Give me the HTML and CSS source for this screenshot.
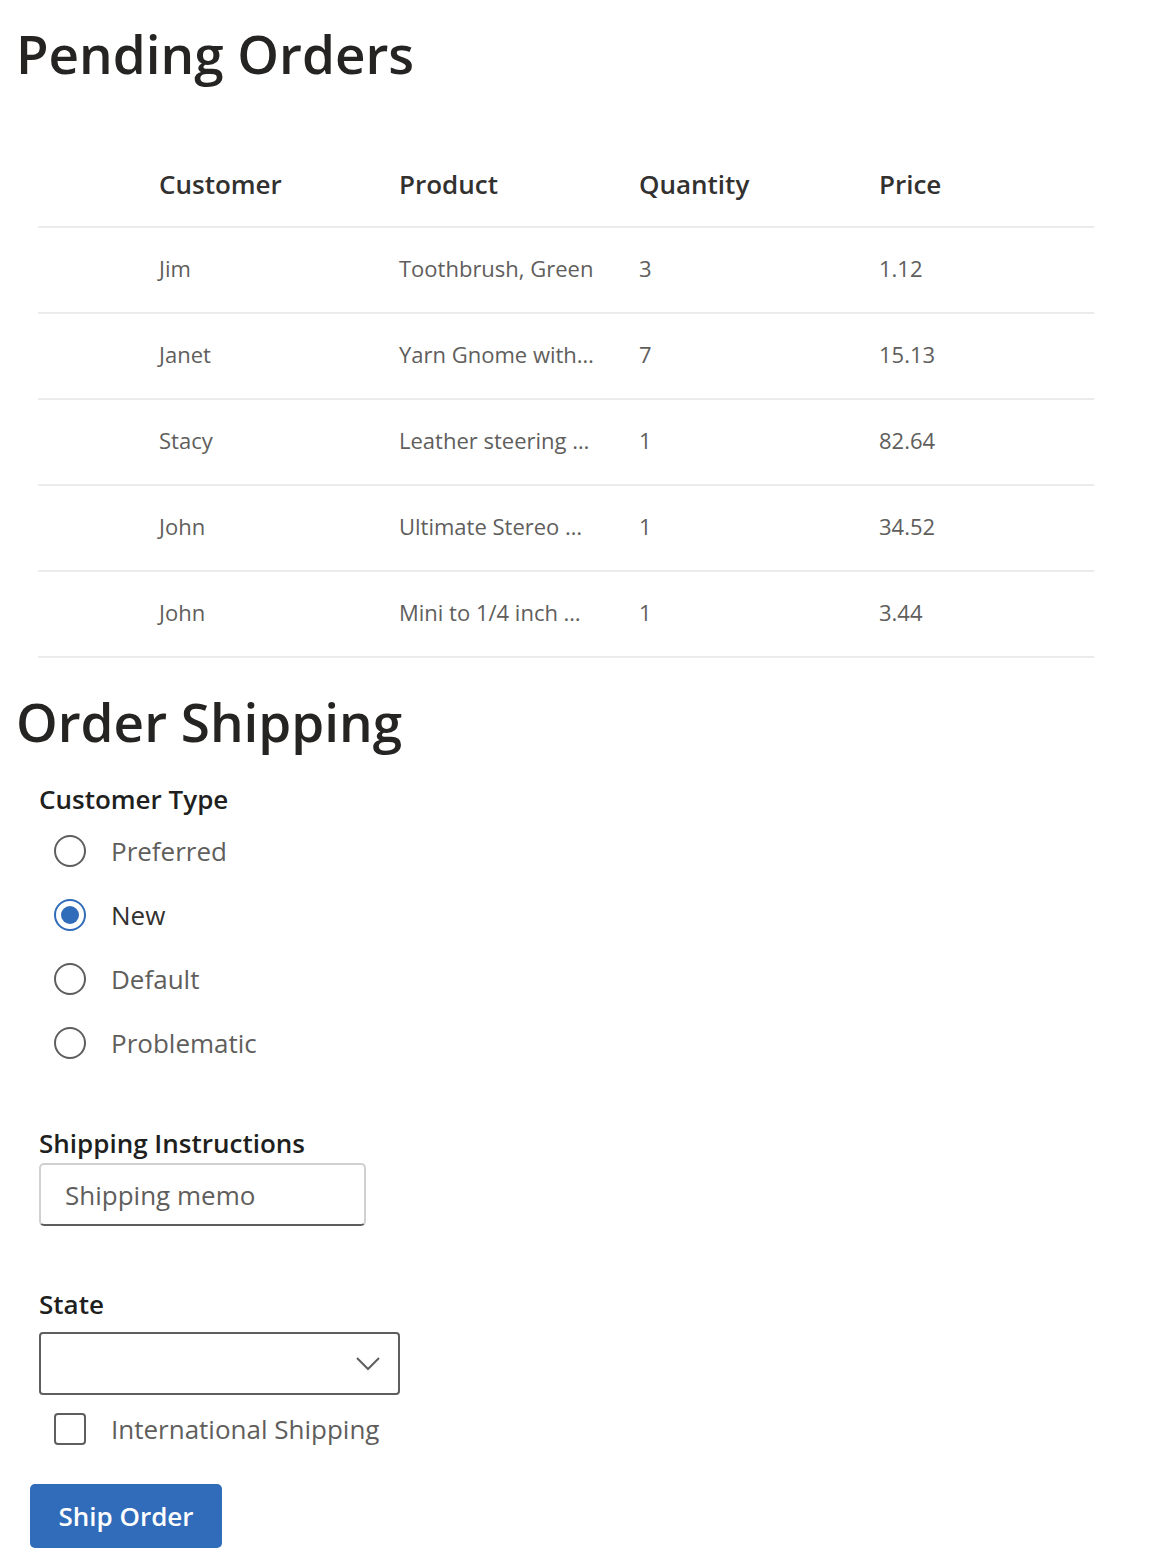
FILE: index.html
```html
<!DOCTYPE html>
<html lang="en">
<head>
<meta charset="utf-8">
<title>Pending Orders</title>
<link rel="stylesheet" href="styles.css">
</head>
<body>
<main class="page">
  <h1 class="title">Pending Orders</h1>
  <div class="list">
    <div class="row head">
      <div class="check"></div>
      <div class="cell">Customer</div>
      <div class="cell">Product</div>
      <div class="cell">Quantity</div>
      <div class="cell">Price</div>
    </div>
    <div class="row">
      <div class="check"></div>
      <div class="cell">Jim</div>
      <div class="cell">Toothbrush, Green</div>
      <div class="cell">3</div>
      <div class="cell">1.12</div>
    </div>
    <div class="row">
      <div class="check"></div>
      <div class="cell">Janet</div>
      <div class="cell">Yarn Gnome with…</div>
      <div class="cell">7</div>
      <div class="cell">15.13</div>
    </div>
    <div class="row">
      <div class="check"></div>
      <div class="cell">Stacy</div>
      <div class="cell">Leather steering …</div>
      <div class="cell">1</div>
      <div class="cell">82.64</div>
    </div>
    <div class="row">
      <div class="check"></div>
      <div class="cell">John</div>
      <div class="cell">Ultimate Stereo …</div>
      <div class="cell">1</div>
      <div class="cell">34.52</div>
    </div>
    <div class="row">
      <div class="check"></div>
      <div class="cell">John</div>
      <div class="cell">Mini to 1/4 inch …</div>
      <div class="cell">1</div>
      <div class="cell">3.44</div>
    </div>
  </div>

  <h1 class="title title2">Order Shipping</h1>
  <form class="form">
    <div class="group">
      <div class="label">Customer Type</div>
      <div class="radios">
        <label class="radio"><span class="circle"></span><span class="rtext">Preferred</span></label>
        <label class="radio on"><span class="circle"></span><span class="rtext">New</span></label>
        <label class="radio"><span class="circle"></span><span class="rtext">Default</span></label>
        <label class="radio"><span class="circle"></span><span class="rtext">Problematic</span></label>
      </div>
    </div>

    <div class="group g-text">
      <div class="label">Shipping Instructions</div>
      <div class="textbox"><span class="placeholder">Shipping memo</span></div>
    </div>

    <div class="group g-state">
      <div class="label">State</div>
      <div class="dropdown">
        <svg class="chev" width="24" height="15" viewBox="0 0 24 15"><path d="M1 2 L12 13 L23 2" fill="none" stroke="#605e5c" stroke-width="2"/></svg>
      </div>
    </div>

    <label class="checkrow"><span class="box"></span><span class="ctext">International Shipping</span></label>

    <div class="actions"><span class="btn">Ship Order</span></div>
  </form>
</main>
</body>
</html>
```

FILE: styles.css
```css
* { box-sizing: border-box; }
html, body { margin: 0; padding: 0; background: #fff; }
body {
  font-family: "Open Sans", "Noto Sans", sans-serif;
  color: #323130;
}
.page { padding: 0 0 16px 0; }

.title {
  margin: 0;
  padding: 14px 0 0 16px;
  font-size: 53px;
  line-height: 80px;
  font-weight: 600;
  color: #252423;
}

.list {
  margin: 48px 0 0 38px;
  width: 1056px;
}
.row {
  display: flex;
  height: 86px;
  align-items: center;
  border-bottom: 2px solid #edebe9;
}
.row:not(.head) .cell { padding-bottom: 4px; }
.check { width: 96px; flex: none; }
.cell {
  width: 240px;
  flex: none;
  padding: 0 16px 0 25px;
  font-size: 22px;
  color: #605e5c;
  white-space: nowrap;
}
.row.head .cell {
  font-size: 26px;
  font-weight: 600;
  color: #323130;
}

.title2 { padding-top: 24px; }

.form { padding-left: 39px; }
.label {
  font-size: 26px;
  font-weight: 600;
  line-height: 40px;
  color: #201f1e;
}
.group:first-child .label { margin-top: 17px; }

.radios { display: flex; flex-direction: column; }
.radio {
  display: flex;
  align-items: center;
  height: 64px;
  padding-left: 15px;
}
.circle {
  width: 32px;
  height: 32px;
  border: 2px solid #605e5c;
  border-radius: 50%;
  flex: none;
  display: flex;
  align-items: center;
  justify-content: center;
}
.radio.on .circle { border-color: #306cb9; }
.radio.on .circle::after {
  content: "";
  width: 18px;
  height: 18px;
  border-radius: 50%;
  background: #306cb9;
}
.rtext {
  margin-left: 25px;
  font-size: 26px;
  color: #605e5c;
}
.radio.on .rtext { color: #323130; }

.g-text { margin-top: 48px; }
.textbox {
  width: 327px;
  height: 63px;
  border: 2px solid #d2d0ce;
  border-bottom-color: #605e5c;
  border-radius: 5px;
  display: flex;
  align-items: center;
  padding-left: 24px;
}
.placeholder { font-size: 26px; color: #605e5c; }

.g-state { margin-top: 58px; }
.g-state .dropdown { margin-top: 8px; }
.dropdown {
  width: 361px;
  height: 63px;
  border: 2px solid #605e5c;
  border-radius: 4px;
  display: flex;
  align-items: center;
  justify-content: flex-end;
  padding-right: 18px;
}

.checkrow {
  display: flex;
  align-items: center;
  height: 64px;
  margin-top: 2px;
  padding-left: 15px;
}
.box {
  width: 32px;
  height: 32px;
  border: 2px solid #605e5c;
  border-radius: 4px;
  flex: none;
}
.ctext {
  margin-left: 25px;
  font-size: 26px;
  color: #605e5c;
}

.actions { margin-top: 23px; margin-left: -9px; }
.btn {
  display: inline-flex;
  align-items: center;
  justify-content: center;
  width: 192px;
  height: 64px;
  border-radius: 5px;
  background: #306cb9;
  color: #fff;
  font-size: 26px;
  font-weight: 600;
}
```
